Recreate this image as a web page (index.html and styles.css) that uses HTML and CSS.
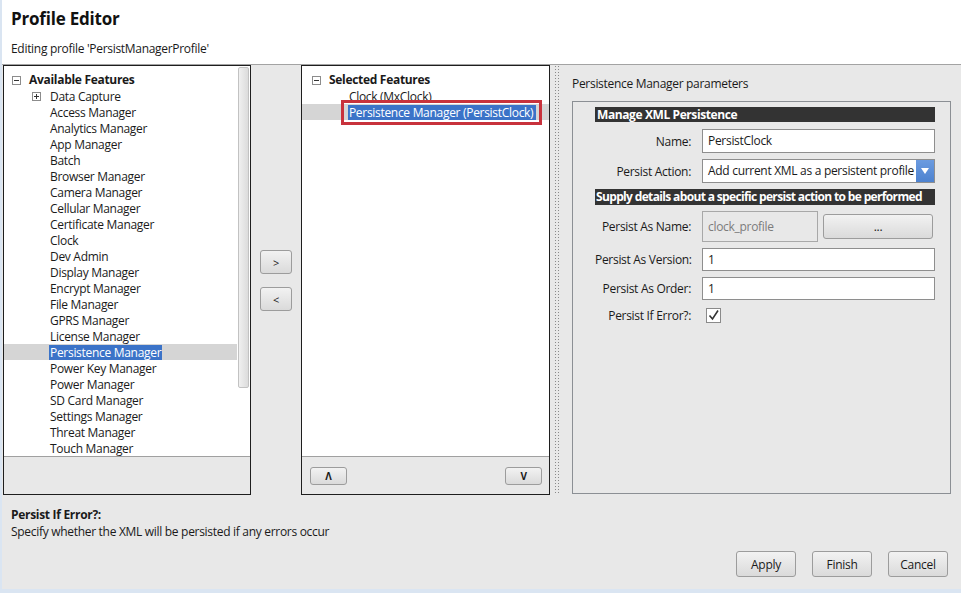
FILE: index.html
```html
<!DOCTYPE html>
<html lang="en">
<head>
    <meta charset="UTF-8">
    <title>Profile Editor</title>
    <link rel="stylesheet" href="styles.css">
</head>
<body>
    <div class="window">
        <div class="header">
            <h1 class="title">Profile Editor</h1>
            <div class="subtitle">Editing profile 'PersistManagerProfile'</div>
        </div>

        <div class="main">
            <!-- 사용 가능한 기능 목록 -->
            <div class="panel panel-available">
                <div class="tree">
                    <div class="node root"><span class="expander minus"></span><b>Available Features</b></div>
                    <div class="node child-group"><span class="expander plus"></span><span class="label">Data Capture</span></div>
                    <div class="node child"><span class="label">Access Manager</span></div>
                    <div class="node child"><span class="label">Analytics Manager</span></div>
                    <div class="node child"><span class="label">App Manager</span></div>
                    <div class="node child"><span class="label">Batch</span></div>
                    <div class="node child"><span class="label">Browser Manager</span></div>
                    <div class="node child"><span class="label">Camera Manager</span></div>
                    <div class="node child"><span class="label">Cellular Manager</span></div>
                    <div class="node child"><span class="label">Certificate Manager</span></div>
                    <div class="node child"><span class="label">Clock</span></div>
                    <div class="node child"><span class="label">Dev Admin</span></div>
                    <div class="node child"><span class="label">Display Manager</span></div>
                    <div class="node child"><span class="label">Encrypt Manager</span></div>
                    <div class="node child"><span class="label">File Manager</span></div>
                    <div class="node child"><span class="label">GPRS Manager</span></div>
                    <div class="node child"><span class="label">License Manager</span></div>
                    <div class="node child selected"><span class="label">Persistence Manager</span></div>
                    <div class="node child"><span class="label">Power Key Manager</span></div>
                    <div class="node child"><span class="label">Power Manager</span></div>
                    <div class="node child"><span class="label">SD Card Manager</span></div>
                    <div class="node child"><span class="label">Settings Manager</span></div>
                    <div class="node child"><span class="label">Threat Manager</span></div>
                    <div class="node child"><span class="label">Touch Manager</span></div>
                    <div class="scrollbar"><div class="thumb"></div></div>
                </div>
                <div class="panel-footer"></div>
            </div>

            <div class="mover">
                <button class="btn btn-move">&gt;</button>
                <button class="btn btn-move">&lt;</button>
            </div>

            <!-- 선택된 기능 목록 -->
            <div class="panel panel-selected">
                <div class="tree">
                    <div class="node root"><span class="expander minus"></span><b>Selected Features</b></div>
                    <div class="node child"><span class="label">Clock (MxClock)</span></div>
                    <div class="node child selected"><span class="label marked">Persistence Manager (PersistClock)</span></div>
                </div>
                <div class="panel-footer footer-order">
                    <button class="btn btn-order">&#x039B;</button>
                    <button class="btn btn-order">V</button>
                </div>
            </div>

            <div class="splitter"></div>

            <!-- 파라미터 -->
            <div class="params">
                <div class="params-title">Persistence Manager parameters</div>
                <div class="group">
                    <div class="bar">Manage XML Persistence</div>
                    <div class="row row-name">
                        <label>Name:</label>
                        <div class="field">PersistClock</div>
                    </div>
                    <div class="row row-action">
                        <label>Persist Action:</label>
                        <div class="field select">
                            <span>Add current XML as a persistent profile</span>
                            <span class="arrow"></span>
                        </div>
                    </div>
                    <div class="bar bar-wide">Supply details about a specific persist action to be performed</div>
                    <div class="row row-asname">
                        <label>Persist As Name:</label>
                        <div class="field-pair">
                            <div class="field disabled">clock_profile</div>
                            <button class="btn btn-browse">...</button>
                        </div>
                    </div>
                    <div class="row row-version">
                        <label>Persist As Version:</label>
                        <div class="field">1</div>
                    </div>
                    <div class="row row-order">
                        <label>Persist As Order:</label>
                        <div class="field">1</div>
                    </div>
                    <div class="row row-check">
                        <label>Persist If Error?:</label>
                        <div class="checkbox">
                            <svg width="13" height="13" viewBox="0 0 13 13"><polyline points="2.5,6.5 5.5,10 11,1.5" fill="none" stroke="#333" stroke-width="1.6"/></svg>
                        </div>
                    </div>
                </div>
            </div>
        </div>

        <div class="help">
            <div class="help-title">Persist If Error?:</div>
            <div class="help-text">Specify whether the XML will be persisted if any errors occur</div>
        </div>

        <div class="actions">
            <button class="btn btn-action">Apply</button>
            <button class="btn btn-action">Finish</button>
            <button class="btn btn-action">Cancel</button>
        </div>
    </div>
</body>
</html>
```

FILE: styles.css
```css
* {
    margin: 0;
    padding: 0;
    box-sizing: border-box;
}

body {
    font-family: 'Open Sans', 'Liberation Sans', sans-serif;
    font-size: 12px;
    letter-spacing: -0.3px;
    color: #1a1a1a;
    width: 961px;
    height: 593px;
    overflow: hidden;
    background: #e8e8e8;
}

.window {
    height: 593px;
    border-left: 2px solid #dae5f2;
    border-bottom: 4px solid #dae5f2;
    display: flex;
    flex-direction: column;
}

/* 헤더 */
.header {
    height: 65px;
    background: #ffffff;
    border-bottom: 1px solid #a3a3a3;
    padding: 7px 0 0 9px;
}

.title {
    font-size: 17px;
    font-weight: 700;
    line-height: 24px;
    letter-spacing: -0.2px;
    color: #111;
}

.subtitle {
    margin-top: 9px;
    line-height: 17px;
}

/* 본문 */
.main {
    display: flex;
    height: 430px;
}

.panel {
    border: 1px solid #1e1e1e;
    display: flex;
    flex-direction: column;
    background: #e8e8e8;
}

.panel-available {
    width: 249px;
    margin-left: 1px;
}

.panel-selected {
    width: 250px;
}

.tree {
    height: 391px;
    background: #ffffff;
    border-bottom: 1px solid #a0a0a0;
    padding-top: 6px;
    position: relative;
    overflow: hidden;
}

.panel-footer {
    flex: 1;
}

.node {
    height: 16px;
    line-height: 16px;
    white-space: nowrap;
    display: flex;
    align-items: center;
}

.node.root {
    padding-left: 8px;
}

.node.root b {
    margin-left: 8px;
    font-weight: 700;
}

.node.child-group {
    padding-left: 28px;
}

.node.child-group .label {
    margin-left: 8px;
}

.node.child {
    padding-left: 45px;
}

.panel-selected .node.root {
    padding-left: 10px;
}

.panel-selected .node.child {
    padding-left: 46px;
}

.label {
    padding: 1px 1px 0 1px;
    line-height: 14px;
}

.node.selected {
    background: #d5d5d5;
}

.node.selected .label {
    background: #3b73c8;
    color: #ffffff;
}

.label.marked {
    position: relative;
    padding-right: 3px;
}

.label.marked::after {
    content: "";
    position: absolute;
    left: -7px;
    right: -6px;
    top: -5px;
    bottom: -5px;
    border: 3px solid #c8323c;
}

/* 트리 확장 아이콘 */
.expander {
    width: 9px;
    height: 9px;
    border: 1px solid #8c8c8c;
    position: relative;
    flex: none;
    background: #fff;
}

.expander::before {
    content: "";
    position: absolute;
    left: 1px;
    right: 1px;
    top: 3px;
    height: 1px;
    background: #333;
}

.expander.plus::after {
    content: "";
    position: absolute;
    top: 1px;
    bottom: 1px;
    left: 3px;
    width: 1px;
    background: #333;
}

.scrollbar {
    position: absolute;
    top: 0;
    right: 0;
    width: 13px;
    height: 100%;
    background: #ffffff;
    padding: 1px 1px 0 1px;
}

.thumb {
    height: 321px;
    border: 1px solid #c2c2c2;
    border-radius: 2px;
    background: linear-gradient(90deg, #f0f0f0, #dcdcdc);
}

/* 이동 버튼 */
.mover {
    width: 50px;
    display: flex;
    flex-direction: column;
    align-items: center;
    justify-content: center;
    gap: 13px;
    padding-top: 1px;
}

.btn {
    font-family: inherit;
    font-size: 12px;
    letter-spacing: -0.3px;
    color: #1a1a1a;
    border: 1px solid #9c9c9c;
    border-radius: 3px;
    background: linear-gradient(#f2f2f2, #dadada);
    cursor: pointer;
}

.btn-move {
    width: 32px;
    height: 24px;
    font-size: 11px;
}

.footer-order {
    display: flex;
    align-items: center;
    justify-content: space-between;
    padding: 1px 7px 0 8px;
}

.btn-order {
    width: 37px;
    height: 18px;
    font-size: 10px;
    font-weight: 700;
    line-height: 14px;
}

.splitter {
    width: 10px;
    margin-left: 2px;
    background-image: radial-gradient(circle, #8a8a8a 0.7px, transparent 1px);
    background-size: 3px 3px;
    background-position: 2px 0;
    background-repeat: repeat;
    background-clip: content-box;
    padding: 0 2px;
}

/* 파라미터 영역 */
.params {
    flex: 1;
    padding: 11px 10px 1px 10px;
    display: flex;
    flex-direction: column;
}

.params-title {
    line-height: 16px;
    margin-bottom: 9px;
}

.group {
    flex: 1;
    border: 1px solid #8b8f94;
    padding: 5px 15px 0 22px;
}

.bar {
    background: #333333;
    color: #ffffff;
    font-weight: 700;
    height: 15px;
    line-height: 15px;
    padding-left: 2px;
    width: 340px;
    white-space: nowrap;
    overflow: hidden;
    letter-spacing: -0.4px;
}

.bar-wide {
    height: 16px;
    line-height: 16px;
    margin-top: 6px;
    padding-left: 1px;
    letter-spacing: -0.65px;
}

.row {
    display: grid;
    grid-template-columns: 96px 233px;
    column-gap: 11px;
    align-items: center;
    margin-top: 6px;
}

.row label {
    text-align: right;
    white-space: nowrap;
}

.row-name {
    margin-top: 7px;
}

.field {
    height: 24px;
    border: 1px solid #8e8e8e;
    background: #ffffff;
    padding: 0 5px;
    line-height: 22px;
    white-space: nowrap;
}

.row-version .field,
.row-order .field {
    height: 23px;
    line-height: 21px;
}

.row-order {
    margin-top: 6px;
}

.select {
    display: flex;
    justify-content: space-between;
    padding-right: 0;
    overflow: hidden;
}

.select .arrow {
    width: 18px;
    height: 22px;
    background: linear-gradient(#6b9be0, #4d82cf);
    position: relative;
    flex: none;
}

.select .arrow::after {
    content: "";
    position: absolute;
    left: 5px;
    top: 8px;
    border-left: 4px solid transparent;
    border-right: 4px solid transparent;
    border-top: 6px solid #ffffff;
}

.field-pair {
    display: flex;
    align-items: center;
    gap: 5px;
}

.field.disabled {
    width: 116px;
    height: 31px;
    line-height: 29px;
    background: #e8e8e8;
    border-color: #a8a8a8;
    color: #7c7c7c;
}

.btn-browse {
    width: 110px;
    height: 25px;
    line-height: 18px;
}

.row-check {
    margin-top: 7px;
    height: 17px;
}

.checkbox {
    width: 15px;
    height: 15px;
    border: 1px solid #8a8a8a;
    background: #ffffff;
    margin-left: 4px;
    display: flex;
    align-items: center;
    justify-content: center;
}

/* 도움말 */
.help {
    padding: 11px 0 0 9px;
}

.help-title {
    font-weight: 700;
    line-height: 17px;
}

.help-text {
    line-height: 17px;
}

/* 하단 버튼 */
.actions {
    display: flex;
    justify-content: flex-end;
    gap: 16px;
    padding: 11px 13px 0 0;
}

.btn-action {
    width: 60px;
    height: 26px;
}
```
